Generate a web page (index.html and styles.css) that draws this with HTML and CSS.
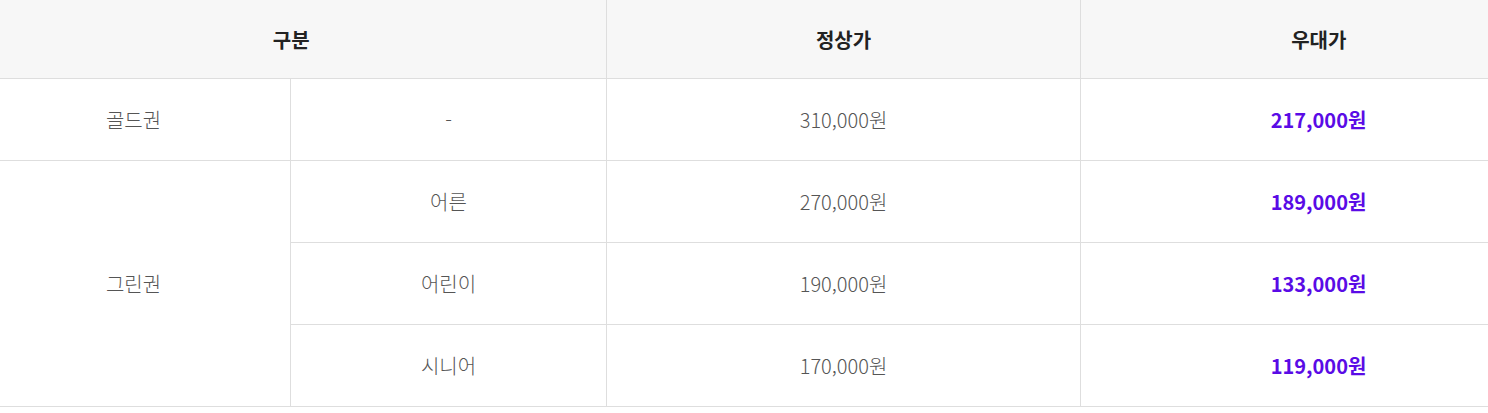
FILE: index.html
```html
<!DOCTYPE html>
<html lang="ko">
<head>
<meta charset="utf-8">
<link rel="stylesheet" href="styles.css">
</head>
<body>
<div class="wrap">
<table class="price">
  <colgroup>
    <col class="c1"><col class="c2"><col class="c3"><col class="c4">
  </colgroup>
  <thead>
    <tr>
      <th colspan="2">구분</th>
      <th>정상가</th>
      <th>우대가</th>
    </tr>
  </thead>
  <tbody>
    <tr>
      <td>골드권</td>
      <td>-</td>
      <td>310,000원</td>
      <td class="sale">217,000원</td>
    </tr>
    <tr>
      <td rowspan="3">그린권</td>
      <td>어른</td>
      <td>270,000원</td>
      <td class="sale">189,000원</td>
    </tr>
    <tr>
      <td>어린이</td>
      <td>190,000원</td>
      <td class="sale">133,000원</td>
    </tr>
    <tr>
      <td>시니어</td>
      <td>170,000원</td>
      <td class="sale">119,000원</td>
    </tr>
  </tbody>
</table>
</div>
</body>
</html>
```

FILE: styles.css
```css
html, body {
  margin: 0;
  padding: 0;
  background: #fff;
  overflow: hidden;
}
.wrap {
  width: 1488px;
  overflow: hidden;
}
.price {
  width: 1580px;
  margin-left: -24px;
  border-collapse: collapse;
  table-layout: fixed;
  font-family: "Noto Sans CJK KR", "Noto Sans", sans-serif;
}
.c1 { width: 314px; }
.c2 { width: 316px; }
.c3 { width: 474px; }
.c4 { width: 476px; }
.price th {
  height: 78px;
  padding: 0;
  background: #f7f7f7;
  color: #222;
  font-size: 20px;
  font-weight: 700;
  text-align: center;
  border-left: 1px solid #dedede;
  border-bottom: 1px solid #dedede;
}
.price th:first-child { border-left: 0; }
.price td {
  height: 81px;
  padding: 0;
  color: #555;
  font-size: 20px;
  font-weight: 300;
  text-align: center;
  border: 1px solid #dedede;
  border-top: 0;
}
.price td.sale {
  color: #5a0be6;
  font-weight: 700;
}
```
